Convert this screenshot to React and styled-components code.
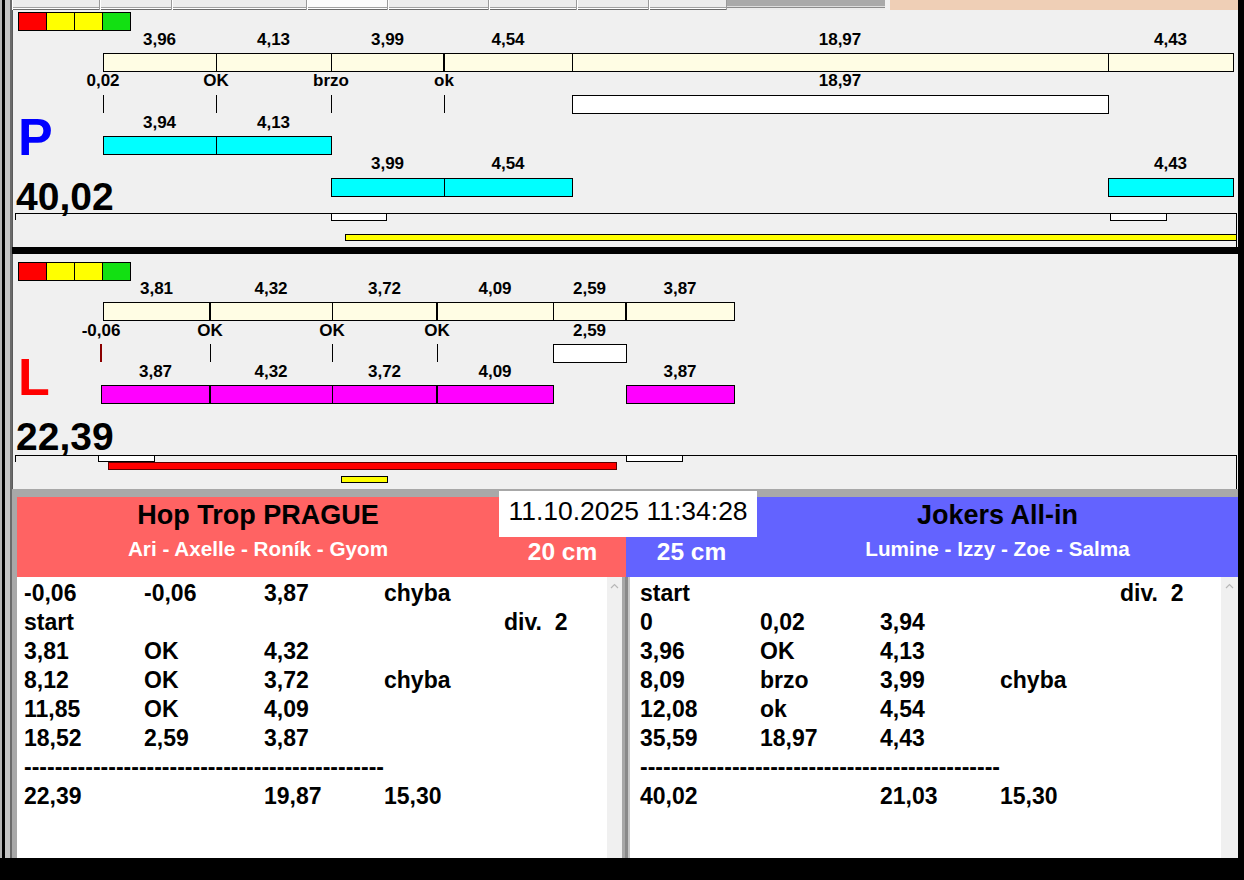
import React from "react";
import styled, { createGlobalStyle } from "styled-components";

const GlobalStyle = createGlobalStyle`
  html, body { margin: 0; padding: 0; background: #000; }
  body { font-family: "Liberation Sans", Arial, sans-serif; }
  * { box-sizing: border-box; }
`;

const CREAM = "#fffde4";
const CYAN = "#00ffff";
const MAGENTA = "#ff00ff";
const YELLOW = "#ffff00";
const RED = "#ff0000";

const Screen = styled.div`
  width: 1244px;
  height: 880px;
  background: #000;
  display: flex;
  flex-direction: column;
  overflow: hidden;
  font-family: "Liberation Sans", Arial, sans-serif;
`;

const Window = styled.div`
  height: 858px;
  display: flex;
  padding-right: 6px;
  flex: none;
`;

const LeftEdge = styled.div`
  width: 12px;
  flex: none;
  background: linear-gradient(
    to right,
    #b4b4b4 0 2px,
    #000 2px 5px,
    #c4c4c4 5px 10px,
    #6a6a6a 10px 12px
  );
`;

const Main = styled.div`
  flex: 1;
  min-width: 0;
  display: flex;
  flex-direction: column;
`;

/* ---------- tab strip ---------- */
const TabStrip = styled.div`
  height: 10px;
  display: flex;
  flex: none;
`;

const Tab = styled.div`
  width: ${(p) => p.$w}px;
  height: 10px;
  flex: none;
  background: linear-gradient(
    to bottom,
    ${(p) => (p.$active ? "#fbfbfb" : "#ececec")} 0 7px,
    #a0a0a0 7px 8px,
    #ffffff 8px 9px,
    #6a6a6a 9px 10px
  );
  border-left: 1px solid #ffffff;
  border-right: 1px solid #9a9a9a;
`;

const TabFiller = styled.div`
  width: ${(p) => p.$w}px;
  flex: none;
  height: 10px;
  background: ${(p) => p.$bg};
`;

/* ---------- track panels ---------- */
const TrackPanel = styled.section`
  position: relative;
  height: ${(p) => p.$h}px;
  flex: none;
  background: #f0f0f0;
  border-left: 1px solid #5a5a5a;
  display: flex;
  flex-direction: column;
  align-items: flex-start;
  padding: ${(p) => p.$pt}px 0 ${(p) => p.$pb}px 5px;
`;

const TrafficLight = styled.div`
  display: flex;
  border: 1px solid #000;
  border-left: none;
`;

const Lamp = styled.div`
  width: 28px;
  height: 17px;
  border-left: 1px solid #000;
  background: ${(p) => p.$c};
`;

const Spacer = styled.div`
  flex: 1;
`;

const BigLetter = styled.div`
  font-size: 52px;
  line-height: 52px;
  font-weight: 700;
  color: ${(p) => p.$c};
`;

const BigTotal = styled.div`
  font-size: 39px;
  line-height: 39px;
  font-weight: 700;
  color: #000;
  margin-top: 14px;
  margin-left: -2px;
`;

const Canvas = styled.div`
  position: absolute;
  inset: 0;
  pointer-events: none;
`;

const ChartLabel = styled.div`
  position: absolute;
  width: 120px;
  margin-left: -60px;
  height: 22px;
  margin-top: -11px;
  line-height: 22px;
  text-align: center;
  font-size: 17px;
  font-weight: 700;
  color: #000;
  white-space: nowrap;
`;

const ChartBox = styled.div`
  position: absolute;
  border: 1px solid ${(p) => p.$border || "#000"};
  background: ${(p) => p.$bg};
`;

const Mark = styled.div`
  position: absolute;
  background: ${(p) => p.$c || "#000"};
`;

const BlackBand = styled.div`
  height: 7px;
  flex: none;
  background: #000;
`;

const GrayBand = styled.div`
  height: 8px;
  flex: none;
  background: #a8a8a8;
`;

/* ---------- team headers ---------- */
const TeamsRow = styled.div`
  position: relative;
  height: 80px;
  flex: none;
  display: flex;
  background: #a8a8a8;
  padding-left: 5px;
`;

const TeamCard = styled.div`
  width: ${(p) => p.$w}px;
  flex: none;
  display: grid;
  grid-template-columns: ${(p) => p.$cols};
  background: ${(p) => p.$bg};
`;

const TeamMain = styled.div`
  display: flex;
  flex-direction: column;
  align-items: center;
  padding-top: 3px;
`;

const TeamTitle = styled.div`
  font-size: 27px;
  line-height: 30px;
  font-weight: 700;
  color: #000;
  white-space: nowrap;
`;

const TeamMembers = styled.div`
  margin-top: 7px;
  font-size: 20.7px;
  line-height: 24px;
  font-weight: 700;
  color: #fff;
  white-space: nowrap;
`;

const TeamSide = styled.div`
  display: flex;
  justify-content: center;
  padding-top: 41px;
  font-size: 24.5px;
  line-height: 28px;
  font-weight: 700;
  color: #fff;
  white-space: nowrap;
`;

const DateBox = styled.div`
  position: absolute;
  left: 487px;
  top: -6px;
  width: 258px;
  height: 46px;
  background: #fff;
  padding-top: 7px;
  text-align: center;
  font-size: 26.5px;
  line-height: 26px;
  color: #000;
  white-space: nowrap;
`;

/* ---------- lists ---------- */
const ListsRow = styled.div`
  height: 281px;
  flex: none;
  display: flex;
  background: #a8a8a8;
  padding-left: 5px;
`;

const ListBox = styled.div`
  width: ${(p) => p.$w}px;
  flex: none;
  background: #fff;
  padding: 2px 0 0 ${(p) => p.$pl}px;
`;

const ListRow = styled.div`
  display: grid;
  grid-template-columns: repeat(5, 120px);
  height: 29px;
  line-height: 29px;
  font-size: 23px;
  font-weight: 700;
  color: #000;
  white-space: pre;
`;

const Dashes = styled.div`
  grid-column: 1 / -1;
  overflow: hidden;
`;

const Scrollbar = styled.div`
  width: ${(p) => p.$w}px;
  flex: none;
  background: #f0f0f0;
  display: flex;
  justify-content: center;
  padding-top: 6px;
`;

const ListDivider = styled.div`
  width: 8px;
  flex: none;
  background: linear-gradient(to right, #a8a8a8 0 3px, #8a8a8a 3px 6px, #c8c8c8 6px 8px);
`;

/* ---------- data ---------- */
const pChart = {
  top: 10,
  letter: "P",
  letterColor: "#0000ff",
  total: "40,02",
  h: 237,
  pt: 2,
  pb: 31,
  labels: [
    [159.5, 40, "3,96"], [273.5, 40, "4,13"], [387.5, 40, "3,99"], [508, 40, "4,54"], [840, 40, "18,97"], [1170.5, 40, "4,43"],
    [103, 81, "0,02"], [216, 81, "OK"], [331, 81, "brzo"], [444, 81, "ok"], [840, 81, "18,97"],
    [159.5, 123, "3,94"], [273.5, 123, "4,13"],
    [387.5, 164, "3,99"], [508, 164, "4,54"], [1170.5, 164, "4,43"],
  ],
  bars: [
    { y: 53, h: 19, bg: CREAM, b: [103, 216, 331, 444, 572, 1108, 1233], thick: [444] },
    { y: 136, h: 19, bg: CYAN, b: [103, 216, 331] },
    { y: 178, h: 19, bg: CYAN, b: [331, 444, 572] },
    { y: 178, h: 19, bg: CYAN, b: [1108, 1233] },
  ],
  boxes: [
    { x: 572, w: 537, y: 95, h: 19, bg: "#fff" },
    { x: 331, w: 56, y: 213, h: 8, bg: "#fff" },
    { x: 1110, w: 57, y: 213, h: 8, bg: "#fff" },
    { x: 345, w: 892, y: 234, h: 7, bg: YELLOW },
  ],
  ticks: [
    { x: 103, y: 95, h: 18 },
    { x: 216, y: 95, h: 18 },
    { x: 331, y: 95, h: 18 },
    { x: 444, y: 95, h: 18 },
  ],
  frameY: 213,
};

const lChart = {
  top: 254,
  letter: "L",
  letterColor: "#ff0000",
  total: "22,39",
  h: 235,
  pt: 8,
  pb: 33,
  labels: [
    [156.5, 289, "3,81"], [271, 289, "4,32"], [384.5, 289, "3,72"], [495, 289, "4,09"], [589.5, 289, "2,59"], [680, 289, "3,87"],
    [101, 331, "-0,06"], [210, 331, "OK"], [332, 331, "OK"], [437, 331, "OK"], [589.5, 331, "2,59"],
    [155.5, 372, "3,87"], [271, 372, "4,32"], [384.5, 372, "3,72"], [495, 372, "4,09"], [680, 372, "3,87"],
  ],
  bars: [
    { y: 302, h: 19, bg: CREAM, b: [103, 210, 332, 437, 553, 626, 734], thick: [210, 437, 626] },
    { y: 385, h: 19, bg: MAGENTA, b: [101, 210, 332, 437, 553], thick: [210, 437] },
    { y: 385, h: 19, bg: MAGENTA, b: [626, 734] },
  ],
  boxes: [
    { x: 553, w: 74, y: 344, h: 19, bg: "#fff" },
    { x: 98, w: 57, y: 455, h: 7, bg: "#fff" },
    { x: 626, w: 57, y: 455, h: 7, bg: "#fff" },
    { x: 108, w: 509, y: 462, h: 8, bg: RED, border: "#5a0000" },
    { x: 341, w: 47, y: 476, h: 7, bg: YELLOW },
  ],
  ticks: [
    { x: 100, y: 344, h: 18, w: 2, c: "#8b0000" },
    { x: 210, y: 344, h: 18 },
    { x: 332, y: 344, h: 18 },
    { x: 437, y: 344, h: 18 },
  ],
  frameY: 455,
};

const OX = 13;
const FRAME_LEFT = 15;
const FRAME_RIGHT = 1236;

const leftRows = [
  ["-0,06", "-0,06", "3,87", "chyba", ""],
  ["start", "", "", "", "div.  2"],
  ["3,81", "OK", "4,32", "", ""],
  ["8,12", "OK", "3,72", "chyba", ""],
  ["11,85", "OK", "4,09", "", ""],
  ["18,52", "2,59", "3,87", "", ""],
  null,
  ["22,39", "", "19,87", "15,30", ""],
];

const rightRows = [
  ["start", "", "", "", "div.  2"],
  ["0", "0,02", "3,94", "", ""],
  ["3,96", "OK", "4,13", "", ""],
  ["8,09", "brzo", "3,99", "chyba", ""],
  ["12,08", "ok", "4,54", "", ""],
  ["35,59", "18,97", "4,43", "", ""],
  null,
  ["40,02", "", "21,03", "15,30", ""],
];

const DASHES = "-".repeat(47);

const tabs = [
  { w: 88 }, { w: 72 }, { w: 135 }, { w: 81, active: true }, { w: 101 }, { w: 88 }, { w: 72 }, { w: 78 },
];

/* ---------- components ---------- */
function Bar({ bar, oy }) {
  const thick = bar.thick || [];
  return bar.b.slice(0, -1).map((x0, i) => {
    const x1 = bar.b[i + 1];
    const w = thick.includes(x1) ? x1 - x0 : x1 - x0 + 1;
    return (
      <ChartBox
        key={i}
        $bg={bar.bg}
        style={{ left: x0 - OX, top: bar.y - oy, width: w, height: bar.h }}
      />
    );
  });
}

function Track({ chart }) {
  const oy = chart.top;
  const frameTop = chart.frameY - oy;
  return (
    <TrackPanel $h={chart.h} $pt={chart.pt} $pb={chart.pb}>
      <TrafficLight>
        <Lamp $c="#ff0000" />
        <Lamp $c="#ffff00" />
        <Lamp $c="#ffff00" />
        <Lamp $c="#12e012" />
      </TrafficLight>
      <Spacer />
      <BigLetter $c={chart.letterColor}>{chart.letter}</BigLetter>
      <BigTotal>{chart.total}</BigTotal>
      <Canvas>
        {chart.bars.map((bar, i) => (
          <Bar key={i} bar={bar} oy={oy} />
        ))}
        {chart.ticks.map((t, i) => (
          <Mark
            key={"t" + i}
            $c={t.c}
            style={{ left: t.x - OX, top: t.y - oy, width: t.w || 1, height: t.h }}
          />
        ))}
        <Mark style={{ left: FRAME_LEFT - OX, top: frameTop, width: FRAME_RIGHT - FRAME_LEFT + 1, height: 1 }} />
        <Mark style={{ left: FRAME_LEFT - OX, top: frameTop, width: 1, height: 7 }} />
        <Mark style={{ left: FRAME_RIGHT - OX, top: frameTop, width: 1, height: chart.h - frameTop }} />
        {chart.boxes.map((b, i) => (
          <ChartBox
            key={"b" + i}
            $bg={b.bg}
            $border={b.border}
            style={{ left: b.x - OX, top: b.y - oy, width: b.w, height: b.h }}
          />
        ))}
        {chart.labels.map(([x, y, t], i) => (
          <ChartLabel key={"l" + i} style={{ left: x - OX, top: y - oy }}>
            {t}
          </ChartLabel>
        ))}
      </Canvas>
    </TrackPanel>
  );
}

function ScoreList({ rows, w, pl }) {
  return (
    <ListBox $w={w} $pl={pl}>
      {rows.map((r, i) => (
        <ListRow key={i}>
          {r ? r.map((c, j) => <span key={j}>{c}</span>) : <Dashes>{DASHES}</Dashes>}
        </ListRow>
      ))}
    </ListBox>
  );
}

function UpArrow() {
  return (
    <svg width="9" height="6" viewBox="0 0 9 6">
      <path d="M1 5 L4.5 1.5 L8 5" fill="none" stroke="#b8b8b8" strokeWidth="1.2" />
    </svg>
  );
}

export default function App() {
  return (
    <Screen>
      <GlobalStyle />
      <Window>
        <LeftEdge />
        <Main>
          <TabStrip>
            {tabs.map((t, i) => (
              <Tab key={i} $w={t.w} $active={t.active} />
            ))}
            <TabFiller $w={158} $bg="linear-gradient(to bottom, #a9a9a9 0 6px, #dcdcdc 6px 7px, #8c8c8c 7px 8px, #ececec 8px 10px)" />
            <TabFiller $w={5} $bg="#f0f0f0" />
            <TabFiller $w={348} $bg="#efcfb6" />
          </TabStrip>
          <Track chart={pChart} />
          <BlackBand />
          <Track chart={lChart} />
          <GrayBand />
          <TeamsRow>
            <TeamCard $w={609} $cols="482px 127px" $bg="#ff6363">
              <TeamMain>
                <TeamTitle>Hop Trop PRAGUE</TeamTitle>
                <TeamMembers>Ari - Axelle - Roník - Gyom</TeamMembers>
              </TeamMain>
              <TeamSide>20 cm</TeamSide>
            </TeamCard>
            <TeamCard $w={612} $cols="131px 481px" $bg="#6363ff">
              <TeamSide>25 cm</TeamSide>
              <TeamMain>
                <TeamTitle>Jokers All-in</TeamTitle>
                <TeamMembers>Lumine - Izzy - Zoe - Salma</TeamMembers>
              </TeamMain>
            </TeamCard>
            <DateBox>11.10.2025 11:34:28</DateBox>
          </TeamsRow>
          <ListsRow>
            <ScoreList rows={leftRows} w={590} pl={7} />
            <Scrollbar $w={15}>
              <UpArrow />
            </Scrollbar>
            <ListDivider />
            <ScoreList rows={rightRows} w={591} pl={10} />
            <Scrollbar $w={17}>
              <UpArrow />
            </Scrollbar>
          </ListsRow>
        </Main>
      </Window>
    </Screen>
  );
}
